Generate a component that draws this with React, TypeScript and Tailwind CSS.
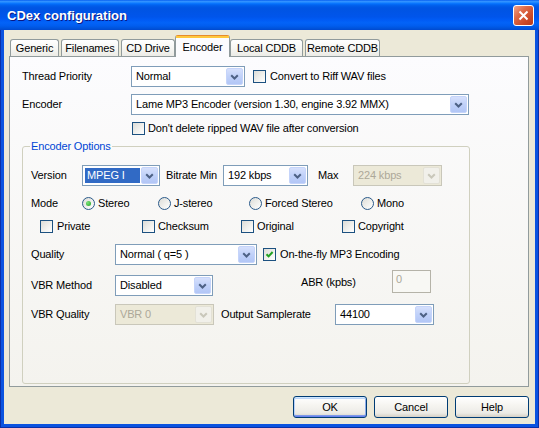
import React from "react";

const FONT = "font-['Liberation_Sans',Arial,sans-serif]";

function Chevron({ disabled }: { disabled?: boolean }) {
  return (
    <svg width="9" height="6" viewBox="0 0 9 6" className="block">
      <path
        d="M1.2 1.2L4.5 4.5L7.8 1.2"
        fill="none"
        stroke={disabled ? "#C9C7BA" : "#4D6185"}
        strokeWidth="2"
      />
    </svg>
  );
}

function Combo({
  className,
  value,
  disabled,
  highlight,
}: {
  className: string;
  value: string;
  disabled?: boolean;
  highlight?: boolean;
}) {
  return (
    <div
      className={`flex h-[21px] shrink-0 border p-px ${
        disabled
          ? "border-[#C9C7BA] bg-[#ECE9D8] text-[#ACA899]"
          : "border-[#7F9DB9] bg-white text-black"
      } ${className}`}
    >
      <div className="flex min-w-0 flex-1 items-center whitespace-nowrap">
        {highlight ? (
          <span className="m-px flex h-[15px] flex-1 items-center bg-[#316AC5] pl-[2px] text-white">
            {value}
          </span>
        ) : (
          <span className="pl-[3px]">{value}</span>
        )}
      </div>
      <div
        className={`flex w-[17px] items-center justify-center rounded-[2px] border ${
          disabled
            ? "border-[#E3E1D6] bg-[#F1F0EA]"
            : "border-[#C5D4FA] bg-[linear-gradient(180deg,#D6E0FC_0%,#C0D1F9_50%,#B2C6F6_100%)]"
        }`}
      >
        <Chevron disabled={disabled} />
      </div>
    </div>
  );
}

function Check({ checked }: { checked?: boolean }) {
  return (
    <span className="flex h-[13px] w-[13px] shrink-0 items-center justify-center border border-[#1C5180] bg-[linear-gradient(135deg,#DCDCD7_0%,#F2F2EF_60%,#FFFFFF_100%)]">
      {checked && (
        <svg width="9" height="9" viewBox="0 0 9 9" className="block">
          <path d="M1.5 4.2L3.6 6.4L7.6 2" fill="none" stroke="#21A121" strokeWidth="2" />
        </svg>
      )}
    </span>
  );
}

function Radio({ on }: { on?: boolean }) {
  return (
    <span className="flex h-[13px] w-[13px] shrink-0 items-center justify-center rounded-full border border-[#2A5A8A] bg-[linear-gradient(135deg,#DCDCD7_0%,#F2F2EF_60%,#FFFFFF_100%)]">
      {on && (
        <span className="h-[5px] w-[5px] rounded-full bg-[radial-gradient(circle_at_35%_35%,#7BE37A,#21A121)]" />
      )}
    </span>
  );
}

function Btn({ children, def }: { children: React.ReactNode; def?: boolean }) {
  return (
    <div
      className={`flex h-[22px] w-[74px] items-center justify-center rounded-[3px] border border-[#003C74] bg-[linear-gradient(180deg,#FFFFFF_0%,#F6F5F1_40%,#ECEBE6_80%,#D6D0C5_100%)] ${
        def
          ? "shadow-[inset_0_1px_0_#CEE7FF,inset_0_-1px_0_#6982EE,inset_1px_0_0_#B9D1FA,inset_-1px_0_0_#8CACEB,inset_0_2px_0_#BCD4F6,inset_0_-2px_0_#7D99E8]"
          : ""
      }`}
    >
      {children}
    </div>
  );
}

function Tab({ label, w }: { label: string; w: string }) {
  return (
    <div
      className={`flex h-[17px] items-center justify-center rounded-t-[3px] border border-b-0 border-[#919B9C] bg-[linear-gradient(180deg,#FFFFFF_0%,#F7F7F4_50%,#ECEBE6_100%)] ${w}`}
    >
      {label}
    </div>
  );
}

export default function App() {
  return (
    <div
      className={`${FONT} flex h-[428px] w-[539px] flex-col bg-[#0B53E0] text-[11px] leading-[13px] tracking-[-0.15px] text-black`}
    >
      {/* Title bar */}
      <div className="flex h-[30px] shrink-0 items-center bg-[linear-gradient(180deg,#0058EE_0%,#3593FF_4%,#288EFF_7%,#127DFF_10%,#036FFC_13%,#0262EE_17%,#0057E5_24%,#0054E3_30%,#0055EB_56%,#005BF5_66%,#0363F8_76%,#015DEF_86%,#0054DD_94%,#0049CF_100%)] pl-[7px]">
        <span className="pt-[1px] text-[13px] font-bold leading-[16px] tracking-normal text-white [text-shadow:1px_1px_0_#0A1883]">
          CDex configuration
        </span>
        <div className="ml-auto mr-[5px] flex h-[21px] w-[21px] items-center justify-center rounded-[3px] border border-white bg-[linear-gradient(135deg,#EFA38A_0%,#DE6A48_35%,#CC4A27_70%,#B83A1A_100%)]">
          <svg width="11" height="11" viewBox="0 0 11 11" className="block">
            <path d="M1.5 1.5L9.5 9.5M9.5 1.5L1.5 9.5" stroke="#FFFFFF" strokeWidth="2" />
          </svg>
        </div>
      </div>

      {/* Frame */}
      <div className="flex flex-1 px-[4px] pb-[4px] shadow-[inset_1px_0_0_#0A2FA8,inset_-1px_0_0_#0A2FA8,inset_0_-1px_0_#0A2FA8]">
        <div className="flex flex-1 flex-col bg-[#ECE9D8] pl-[5px] pr-[6px] pt-[5px]">
          {/* Tabs */}
          <div className="flex h-[21px] items-end pl-[1px]">
            <Tab label="Generic" w="w-[49px] mr-[2px]" />
            <Tab label="Filenames" w="w-[58px] mr-[2px]" />
            <Tab label="CD Drive" w="w-[54px]" />
            <div className="relative z-10 -mb-px flex h-[22px] w-[55px] flex-col rounded-t-[3px] border-x border-t border-[#919B9C] border-t-[#E68B2C] bg-[#FCFCFE]">
              <div className="h-[2px] bg-[#FFC83C]" />
              <div className="flex flex-1 items-center justify-center pb-[1px]">Encoder</div>
            </div>
            <Tab label="Local CDDB" w="w-[73px] mr-[2px]" />
            <Tab label="Remote CDDB" w="w-[75px]" />
          </div>

          {/* Panel */}
          <div className="flex h-[331px] w-[520px] flex-col border border-[#919B9C] bg-[linear-gradient(180deg,#FCFCFE_0%,#F4F3EE_100%)] pl-[12px]">
            <div className="mt-[9px] flex h-[21px] items-center">
              <span className="w-[109px]">Thread Priority</span>
              <Combo className="w-[114px]" value="Normal" />
              <span className="ml-[8px]">
                <Check />
              </span>
              <span className="ml-[4px]">Convert to Riff WAV files</span>
            </div>

            <div className="mt-[7px] flex h-[21px] items-center">
              <span className="w-[109px]">Encoder</span>
              <Combo className="w-[338px]" value="Lame MP3 Encoder (version 1.30, engine 3.92 MMX)" />
            </div>

            <div className="ml-[110px] mt-[7px] flex h-[13px] items-center">
              <Check />
              <span className="ml-[3px]">Don't delete ripped WAV file after conversion</span>
            </div>

            <fieldset className="mt-[5px] h-[244px] w-[448px] rounded-[3px] border border-[#D0D0BF]">
              <legend className="ml-[7px] px-[1px] leading-[13px] text-[#0046D5]">Encoder Options</legend>

              <div className="mt-[12px] flex h-[21px] items-center pl-[8px]">
                <span className="w-[51px]">Version</span>
                <Combo className="w-[78px]" value="MPEG I" highlight />
                <span className="w-[63px] pl-[6px]">Bitrate Min</span>
                <Combo className="w-[85px]" value="192 kbps" />
                <span className="w-[45px] pl-[10px]">Max</span>
                <Combo className="w-[89px]" value="224 kbps" disabled />
              </div>

              <div className="mt-[11px] flex h-[13px] items-center pl-[8px]">
                <span className="w-[51px]">Mode</span>
                <div className="flex w-[76px] items-center">
                  <Radio on />
                  <span className="ml-[3px]">Stereo</span>
                </div>
                <div className="flex w-[91px] items-center">
                  <Radio />
                  <span className="ml-[3px]">J-stereo</span>
                </div>
                <div className="flex w-[112px] items-center">
                  <Radio />
                  <span className="ml-[3px]">Forced Stereo</span>
                </div>
                <div className="flex items-center">
                  <Radio />
                  <span className="ml-[3px]">Mono</span>
                </div>
              </div>

              <div className="mt-[10px] flex h-[13px] items-center pl-[17px]">
                <div className="flex w-[102px] items-center">
                  <Check />
                  <span className="ml-[4px]">Private</span>
                </div>
                <div className="flex w-[99px] items-center">
                  <Check />
                  <span className="ml-[3px]">Checksum</span>
                </div>
                <div className="flex w-[101px] items-center">
                  <Check />
                  <span className="ml-[3px]">Original</span>
                </div>
                <div className="flex items-center">
                  <Check />
                  <span className="ml-[3px]">Copyright</span>
                </div>
              </div>

              <div className="mt-[11px] flex h-[21px] items-center pl-[8px]">
                <span className="w-[84px]">Quality</span>
                <Combo className="w-[142px]" value="Normal ( q=5 )" />
                <span className="ml-[6px]">
                  <Check checked />
                </span>
                <span className="ml-[4px]">On-the-fly MP3 Encoding</span>
              </div>

              <div className="mt-[10px] flex h-[21px] items-center pl-[8px]">
                <span className="w-[84px]">VBR Method</span>
                <Combo className="w-[98px]" value="Disabled" />
                <span className="mb-[6px] ml-[88px] w-[91px]">ABR (kpbs)</span>
                <div className="mb-[8px] h-[23px] w-[39px] border border-[#B5B3A8] bg-[#F8F8F4] pl-[3px] pt-[2px] text-[#ACA899]">
                  0
                </div>
              </div>

              <div className="mt-[8px] flex h-[21px] items-center pl-[8px]">
                <span className="w-[84px]">VBR Quality</span>
                <Combo className="w-[99px]" value="VBR 0" disabled />
                <span className="w-[121px] pl-[7px]">Output Samplerate</span>
                <Combo className="w-[99px]" value="44100" />
              </div>
            </fieldset>
          </div>

          {/* Buttons */}
          <div className="mt-[9px] flex justify-end gap-[7px]">
            <Btn def>OK</Btn>
            <Btn>Cancel</Btn>
            <Btn>Help</Btn>
          </div>
        </div>
      </div>
    </div>
  );
}
